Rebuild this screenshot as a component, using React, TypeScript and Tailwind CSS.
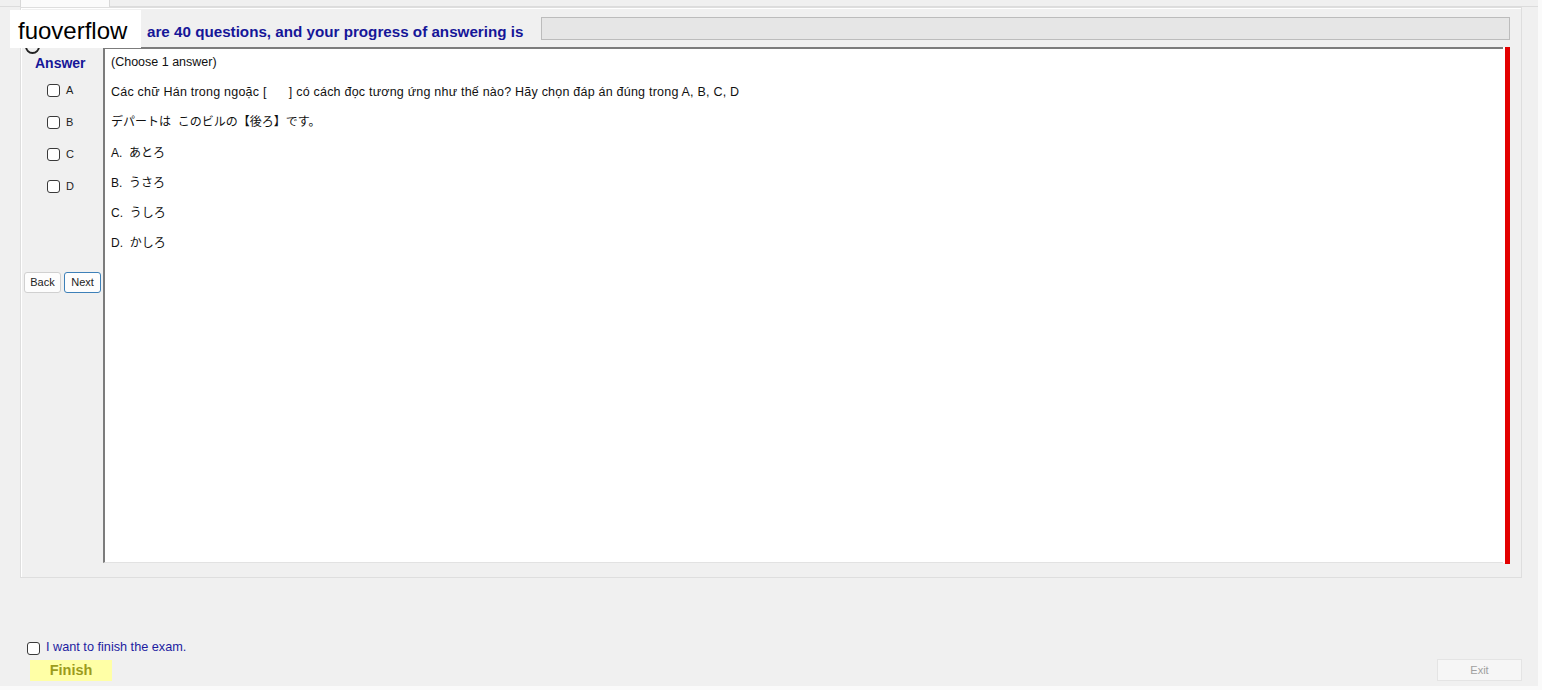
import React from "react";

const answers = ["A", "B", "C", "D"];

const Box = () => (
  <div className="w-[13px] h-[13px] rounded-[3px] border border-[#3a3a3a] bg-white" />
);

const App = () => {
  return (
    <div
      className="relative w-[1542px] h-[690px] overflow-hidden bg-[#fafafa]"
      style={{ fontFamily: '"Liberation Sans", "Noto Sans CJK JP", Arial, sans-serif' }}
    >
      <div className="w-[1538px] h-[686px] bg-[#f0f0f0] flex flex-col">
        {/* tab strip */}
        <div className="flex h-[7px]">
          <div className="w-[20px] border-b border-[#dcdcdc]" />
          <div className="w-[90px] h-[7px] bg-[#fbfbfb] border-x border-[#d8d8d8]" />
          <div className="flex-1 border-b border-[#dcdcdc]" />
        </div>

        {/* group box */}
        <div className="ml-[20px] w-[1502px] h-[571px] border border-[#dedede] shadow-[inset_1px_1px_0_#ffffff] flex flex-col">
          {/* header */}
          <div className="flex items-end h-[23px] mt-[9px]">
            <div className="w-[520px] pl-[126px] text-[15.2px] leading-[17px] font-bold text-[#161698] whitespace-nowrap">
              are 40 questions, and your progress of answering is
            </div>
            <div className="w-[969px] h-[23px] bg-[#e6e6e6] border border-[#bcbcbc]" />
          </div>

          {/* body */}
          <div className="flex mt-[7px] h-[516px]">
            {/* answer column */}
            <div className="w-[82px] flex flex-col pl-[2px]">
              <div className="pt-[8px] pl-[12px] text-[14px] leading-[16px] font-bold text-[#161698]">
                Answer
              </div>
              <div className="mt-[3px] flex flex-col">
                {answers.map((a) => (
                  <div key={a} className="h-[32px] flex items-center pl-[24px] gap-[6px]">
                    <Box />
                    <span className="text-[11px] text-[#222]">{a}</span>
                  </div>
                ))}
              </div>
              <div className="mt-[70px] flex gap-[3px] pl-[1px]">
                <button className="w-[37px] h-[21px] rounded-[3px] border border-[#d0d0d0] bg-[#fdfdfd] text-[11px] text-[#222]">
                  Back
                </button>
                <button className="w-[37px] h-[21px] rounded-[3px] border border-[#3d80b8] bg-[#fdfdfd] text-[11px] text-[#222]">
                  Next
                </button>
              </div>
            </div>

            {/* question panel */}
            <div className="w-[1407px] h-[516px] flex">
              <div className="flex-1 bg-white border-l-2 border-t-2 border-[#7c7c7c] border-b border-b-[#e2e2e2] pl-[6px] pt-[5px] flex flex-col gap-[14.2px] text-[12.5px] leading-[16px] text-[#111]">
                <div>(Choose 1 answer)</div>
                <div className="tracking-[0.22px] whitespace-pre">
                  Các chữ Hán trong ngoặc [      ] có cách đọc tương ứng như thế nào? Hãy chọn đáp án đúng trong A, B, C, D
                </div>
                <div className="whitespace-pre text-[12px]">デパートは  このビルの【後ろ】です。</div>
                <div className="text-[12px]">A.&nbsp; あとろ</div>
                <div className="text-[12px]">B.&nbsp; うさろ</div>
                <div className="text-[12px]">C.&nbsp; うしろ</div>
                <div className="text-[12px]">D.&nbsp; かしろ</div>
              </div>
              <div className="w-[2px] bg-white" />
              <div className="w-[5px] h-[517px] bg-[#e30000]" />
            </div>
          </div>
        </div>

        {/* footer */}
        <div className="mt-[63px] ml-[27px] h-[14px] flex items-center gap-[6px]">
          <Box />
          <span className="text-[12.7px] text-[#1c1ca0]">I want to finish the exam.</span>
        </div>
        <div className="mt-[4px] flex items-end">
          <button className="ml-[30px] w-[82px] h-[21px] bg-[#ffffa6] text-[14.5px] font-bold text-[#9c9c1c]">
            Finish
          </button>
          <button className="ml-auto mr-[16px] w-[85px] h-[22px] bg-[#f6f6f6] border border-[#e4e4e4] text-[11px] text-[#a0a0a0]">
            Exit
          </button>
        </div>
      </div>

      {/* watermark overlay */}
      <div className="absolute left-[25px] top-[39px] w-[15px] h-[15px] rounded-full border-2 border-[#222]" />
      <div className="absolute left-[10px] top-[10px] w-[131px] h-[38px] bg-white flex items-center pl-[8px] pt-[3px] text-[24px] text-black">
        fuoverflow
      </div>
    </div>
  );
};

export default App;
